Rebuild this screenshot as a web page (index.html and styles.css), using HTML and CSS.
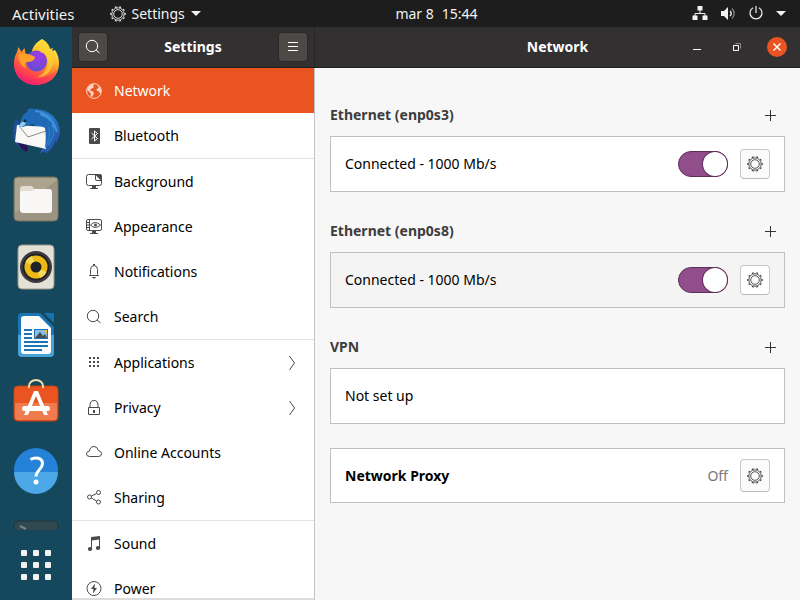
FILE: index.html
```html
<!DOCTYPE html>
<html lang="en">
<head>
<meta charset="utf-8">
<title>Settings</title>
<link rel="stylesheet" href="styles.css">
</head>
<body>
<svg class="defs" aria-hidden="true">
  <defs>
    <symbol id="gear" viewBox="0 0 16 16">
      <circle cx="8" cy="8" r="6.2" fill="none" stroke="currentColor" stroke-width=".9"/>
      <circle cx="8" cy="8" r="7.200" fill="none" stroke="currentColor" stroke-width="1.200" pathLength="20" stroke-dasharray=".8 1.2" stroke-dashoffset=".4"/>
      <circle cx="8" cy="8" r="4.300" fill="none" stroke="currentColor" stroke-width=".9"/>
    </symbol>
    <symbol id="search" viewBox="0 0 16 16">
      <g fill="none" stroke="currentColor"><circle cx="7" cy="7" r="5.700"/><path d="M11 11l3.500 3"/></g>
    </symbol>
    <symbol id="plus" viewBox="0 0 11 11">
      <path d="M5 0h1v11H5zM0 5h11v1H0z" fill="currentColor"/>
    </symbol>
    <symbol id="chevron" viewBox="0 0 8 16">
      <path d="M1.500 1 6.500 8l-5 7" fill="none" stroke="currentColor"/>
    </symbol>
  </defs>
</svg>

<header class="topbar">
  <button class="top-item activities">Activities</button>
  <button class="top-item app-menu">
    <svg class="icon"><use href="#gear"/></svg>Settings
    <svg class="caret" viewBox="0 0 10 5"><path d="M0 0h10L5 5z" fill="currentColor"/></svg>
  </button>
  <time class="clock"><span>mar 8</span><span>15:44</span></time>
  <button class="status" aria-label="System menu">
    <svg class="icon" viewBox="0 0 16 16"><path d="M5.500 0h5v4.500h-5zM.5 9.500h5V14h-5zM10.500 9.500h5V14h-5z" fill="currentColor"/><path d="M8 4v3M3 10V7.500h10V10" fill="none" stroke="currentColor"/></svg>
    <svg class="icon" viewBox="0 0 16 16"><path d="M1 5h3l4-4v13l-4-4H1z" fill="currentColor"/><path d="M10 5q2.500 2.500 0 5" fill="none" stroke="currentColor" stroke-width="1.300"/><path d="M12 2.500q4.500 5 0 10" fill="none" stroke="#888" stroke-width="1.200"/></svg>
    <svg class="icon" viewBox="0 0 16 16"><path d="M5 1.700a6 6 0 1 0 6 0M8 0v7" fill="none" stroke="currentColor" stroke-width="1.200"/></svg>
    <svg class="caret" viewBox="0 0 10 5"><path d="M0 0h10L5 5z" fill="currentColor"/></svg>
  </button>
</header>

<div class="desktop">
  <nav class="dock" aria-label="Dock">
    <div class="launchers">
    <button class="launcher" aria-label="Firefox">
      <svg viewBox="0 0 48 48">
        <defs>
          <linearGradient id="ff" x1=".8" y1="0" x2=".25" y2="1"><stop offset="0" stop-color="#fff44f"/><stop offset=".3" stop-color="#ffc42e"/><stop offset=".55" stop-color="#ff7a30"/><stop offset=".8" stop-color="#ff3d52"/><stop offset="1" stop-color="#ee1f78"/></linearGradient>
          <radialGradient id="fp" cx=".6" cy=".3" r=".8"><stop offset="0" stop-color="#a13be8"/><stop offset="1" stop-color="#5b50cc"/></radialGradient>
        </defs>
        <path d="M30 0c5 3 7 6 8 10l3-1-1 3 3-1c3 4 4 9 4 13 0 13-10 22-23 22C11 46 2 37 2 25c0-6 1-8 3-12l1.500-5 3 5 3-4 1 6 6 1c0-8 5-13 10.500-16z" fill="url(#ff)"/>
        <circle cx="24.500" cy="22" r="10.500" fill="url(#fp)"/>
        <path d="M28 13c-2-5-1-10 2-13 5 3 7 6 8 10 4 5 5 13 1 20-3 6-8 8-13 8 7-3 12-12 9-20-1-3-4-4-7-5z" fill="#ffd335" opacity=".75"/>
        <path d="M6 16c6-3 11-1 17 2 0 4-5 5-8 5-3 1-2 4-1 7-5-3-7-8-8-14z" fill="#ffa02b"/>
        <path d="M2 28c5 11 24 19 43 3-3 9-11 15-21 15S5 38 2 28z" fill="#f42468" opacity=".45"/>
      </svg>
    </button>
    <button class="launcher" aria-label="Thunderbird">
      <svg viewBox="0 0 48 48">
        <defs><linearGradient id="tb" x1="0" y1="0" x2="1" y2="1"><stop offset="0" stop-color="#2463b5"/><stop offset=".5" stop-color="#2878cb"/><stop offset="1" stop-color="#27439a"/></linearGradient></defs>
        <path d="M1 23c0-5 2-9 4-11l3 5-2 18 3 7C3 37 1 30 1 23z" fill="#234c9e"/>
        <path d="M5 34l11 5-1 6C10 43 7 39 5 34z" fill="#2a1458"/>
        <path d="M15 3 19 1l2 1c14-1 26 8 27 22 0 5-2 9-4 12v-3c-2 6-6 11-11 14l1-3-6 2 5-8z" fill="url(#tb)"/>
        <path d="M5 18 35 20l-1 22L3 35z" fill="#f8f8f7"/>
        <path d="M7 19l9 11 18-6" fill="none" stroke="#8c8c8c"/>
        <path d="M9 13c2-7 7-10 14-10 13 1 21 9 20 21-2 9-5 14-10 17 1-8 1-14 0-20-6-4-14-5-22-1-3 0-3-4-2-7z" fill="#2069b6"/>
        <path d="M23 4c10 1 17 6 20 17l-3-3M28 7c9 3 15 9 17 18" fill="none" stroke="#3c91d8" stroke-width="2"/>
        <path d="M36 20c3 3 2 12-2 19M41 21c2 4-1 12-5 17" fill="none" stroke="#3186cb"/>
        <path d="M14 15c-5-1-7 1-6 6l5-3z" fill="#8ccbea"/><circle cx="13" cy="14" r="1.400" fill="#17232e"/>
      </svg>
    </button>
    <button class="launcher" aria-label="Files">
      <svg viewBox="0 0 48 48"><rect x="2" y="2" width="44" height="44" rx="4" fill="#9c9482" stroke="#79715f"/><path d="M3 5q0-2 2-2h38q2 0 2 2L3 38z" fill="#aca48f"/><path d="M8 14q0-3 3-3h9l3 4h14v8H8z" fill="#e1ddd2"/><path d="M8 18q0-2 2-2h10l3-2h14q3 0 3 3v18q0 3-3 3H11q-3 0-3-3z" fill="#f8f7f5"/></svg>
    </button>
    <button class="launcher" aria-label="Rhythmbox">
      <svg viewBox="0 0 48 48"><rect x="6" y="2" width="36" height="44" rx="4" fill="#e4e0d6" stroke="#9c978a"/><circle cx="24" cy="24" r="16" fill="#3c3b41"/><circle cx="24" cy="24" r="13.500" fill="#202024"/><circle cx="24" cy="24" r="11.500" fill="#ecb915"/><path d="M24 24 13.500 19A12 12 0 0 1 20 13zM24 24l10.500 5A12 12 0 0 1 28 35z" fill="#f5d75b"/><circle cx="24" cy="24" r="5.500" fill="#202326"/></svg>
    </button>
    <button class="launcher" aria-label="LibreOffice Writer">
      <svg viewBox="0 0 48 48"><path d="M10 2h18l14 14v26q0 4-4 4H10q-4 0-4-4V6q0-4 4-4z" fill="#1b75b4"/><path d="M6 24h36v18q0 4-4 4H10q-4 0-4-4z" fill="#46a2d9"/><path d="M32 2h10v10z" fill="#1672ae"/><path d="M12 5h15l12 12v23q0 3-3 3H12q-3 0-3-3V8q0-3 3-3z" fill="#fcfcfc"/><g fill="#1b75b4"><path d="M12 18h8v2h-8zM12 22h8v2h-8zM12 26h8v2h-8zM12 30h24v2H12zM12 34h24v2H12zM12 38h18v2H12z"/><path d="M22 18h14v10H22z"/></g><path d="M23 19h12v8H23z" fill="#83bfe8"/><path d="M32 19h3v4z" fill="#f4bd21"/><path d="m23 27 5-6 3 4 2-2 2 4z" fill="#4b4b4b"/></svg>
    </button>
    <button class="launcher" aria-label="Ubuntu Software">
      <svg viewBox="0 0 48 48"><rect x="2" y="7" width="44" height="35" rx="4" fill="#e95420" stroke="#c4441a"/><path d="M3 24h42v14q0 3-3 3H6q-3 0-3-3z" fill="#f07b4e"/><path d="M17 9V7a7 6 0 0 1 14 0v2" fill="none" stroke="#f3dfae" stroke-width="2"/><path d="M22 12h4l10 24h-4L24 17l-8 19h-4z" fill="#fff"/><rect x="10" y="27" width="28" height="5" rx="2.500" fill="#fff"/></svg>
    </button>
    <button class="launcher" aria-label="Help">
      <svg viewBox="0 0 48 48"><circle cx="24" cy="23" r="22" fill="#2582d8"/><path d="M2 25h44a22 22 0 0 1-44 0z" fill="#4ba7e6"/><path d="M18.500 12.500c5-3 12-1.500 12 4 0 6-6.500 6.500-6.500 13" fill="none" stroke="#fff" stroke-width="3"/><circle cx="24" cy="35" r="2.500" fill="#fff"/></svg>
    </button>
    <button class="launcher" aria-label="Terminal">
      <svg viewBox="0 0 48 48"><rect x="2" y="6" width="44" height="36" rx="4" fill="#30484f" stroke="#24353b"/><path d="m8 11 6 3" stroke="#78868a" stroke-width="2"/></svg>
    </button>
    </div>
    <button class="show-apps" aria-label="Show Applications">
      <svg viewBox="0 0 30 30" fill="#f2f1f0"><rect width="6" height="6" rx="1"/><rect x="12" width="6" height="6" rx="1"/><rect x="24" width="6" height="6" rx="1"/><rect y="12" width="6" height="6" rx="1"/><rect x="12" y="12" width="6" height="6" rx="1"/><rect x="24" y="12" width="6" height="6" rx="1"/><rect y="24" width="6" height="6" rx="1"/><rect x="12" y="24" width="6" height="6" rx="1"/><rect x="24" y="24" width="6" height="6" rx="1"/></svg>
    </button>
  </nav>

  <section class="sidebar">
    <header class="titlebar">
      <button class="tool" aria-label="Search"><svg class="icon"><use href="#search"/></svg></button>
      <h1>Settings</h1>
      <button class="tool" aria-label="Menu"><svg class="icon" viewBox="0 0 16 16"><path d="M3 3h10v1H3zM3 7h10v1H3zM3 11h10v1H3z" fill="currentColor"/></svg></button>
    </header>
    <nav class="panels" aria-label="Panels">
      <ul>
        <li><a class="current" href="#network"><svg class="icon" viewBox="0 0 16 16"><circle cx="8" cy="8" r="7.400" fill="none" stroke="currentColor"/><path d="M2 4 6 1l2 .5-1 2 1 1-3 1.500-1 1.500 3 1 1 2-2 3.500-1.500-1L5 11 3 8.500 1 7zM11 2l3 2 1.300 4-1.300 3-1-2.500-2-.5-.5-2L13 5z" fill="currentColor"/></svg>Network</a></li>
        <li><a href="#bluetooth"><svg class="icon" viewBox="0 0 16 16"><rect x="3" y="0" width="11" height="16" rx="1" fill="currentColor"/><path d="m5.500 5 6 5.500-3 2.500V3l3 2.500-6 5.500" fill="none" stroke="#fff"/></svg>Bluetooth</a></li>
      </ul>
      <ul>
        <li><a href="#background"><svg class="icon" viewBox="0 0 16 16"><path d="M9.500 .5h-7Q.5.500.5 2.500v7q0 2 2 2h11q2 0 2-2V6" fill="none" stroke="currentColor"/><path d="M9 0h5q2 0 2 2v5h-5q-2 0-2-2z" fill="currentColor"/><path d="M6 12h4v2h2v1H4v-1h2z" fill="currentColor"/><path d="M10 1.500 14.500 6H11q-1 0-1-1z" fill="#fff"/></svg>Background</a></li>
        <li><a href="#appearance"><svg class="icon" viewBox="0 0 16 16"><rect x=".5" y=".5" width="15" height="11" rx="1.500" fill="none" stroke="currentColor"/><path d="M3.500 1v10M1 3.500h2M1 6h2M1 8.500h2M4.500 6q4.500-5 10 0-5.500 5-10 0z" fill="none" stroke="currentColor"/><circle cx="9.500" cy="6" r="1.500" fill="currentColor"/><path d="M6 12h4v2h2v1H4v-1h2z" fill="currentColor"/></svg>Appearance</a></li>
        <li><a href="#notifications"><svg class="icon" viewBox="0 0 16 16"><path d="M4.500 10.500V5.500q0-3.500 3.500-4 3.500.5 3.500 4v5M3 11.500h10" fill="none" stroke="currentColor"/><path d="M7 0h2v1.500H7zM6 13h4q-.5 1.500-2 1.500T6 13z" fill="currentColor"/></svg>Notifications</a></li>
        <li><a href="#search-panel"><svg class="icon"><use href="#search"/></svg>Search</a></li>
      </ul>
      <ul>
        <li><a href="#applications"><svg class="icon" viewBox="0 0 16 16" fill="currentColor"><path d="M3 2h2v2H3zM7 2h2v2H7zM11 2h2v2h-2zM3 6h2v2H3zM7 6h2v2H7zM11 6h2v2h-2zM3 10h2v2H3zM7 10h2v2H7zM11 10h2v2h-2z"/></svg>Applications<svg class="chevron"><use href="#chevron"/></svg></a></li>
        <li><a href="#privacy"><svg class="icon" viewBox="0 0 16 16"><path d="M2.500 7.500h11v7h-11zM4 7.500V5q0-4.500 4-4.500t4 4.500v2.500" fill="none" stroke="currentColor"/><path d="M7 10h2v3H7z" fill="currentColor"/></svg>Privacy<svg class="chevron"><use href="#chevron"/></svg></a></li>
        <li><a href="#accounts"><svg class="icon" viewBox="0 0 16 16"><path d="M3.500 11.500q-3 0-3-2.800 0-2.200 3-2.700.5-4.500 4.500-4.500 3.500 0 4.300 4 3.200.5 3.200 3.200 0 2.800-3 2.800z" fill="none" stroke="currentColor"/></svg>Online Accounts</a></li>
        <li><a href="#sharing"><svg class="icon" viewBox="0 0 16 16" fill="none" stroke="currentColor"><circle cx="3.500" cy="7" r="2"/><circle cx="12.500" cy="2.500" r="2"/><circle cx="12.500" cy="12" r="2"/><path d="m5.500 6 5-2.500M5.500 8l5 3"/></svg>Sharing</a></li>
      </ul>
      <ul>
        <li><a href="#sound"><svg class="icon" viewBox="0 0 16 16"><path d="M5 1 14 0v12h-1V3.500L6 4.500v9H5z" fill="currentColor"/><ellipse cx="4" cy="13" rx="2.200" ry="2" fill="currentColor"/><ellipse cx="12" cy="12" rx="2.200" ry="2" fill="currentColor"/></svg>Sound</a></li>
        <li><a href="#power"><svg class="icon" viewBox="0 0 16 16"><circle cx="8" cy="7.500" r="7" fill="none" stroke="currentColor"/><path d="M9 2.500 5 8h2.500L7 12.500 11 7H8.500z" fill="currentColor"/></svg>Power</a></li>
      </ul>
    </nav>
  </section>

  <section class="content" id="network">
    <header class="titlebar">
      <h2>Network</h2>
      <div class="window-controls">
        <button aria-label="Minimize"><svg class="icon" viewBox="0 0 16 16"><path d="M4 10h8v1H4z" fill="currentColor"/></svg></button>
        <button aria-label="Restore"><svg class="icon" viewBox="0 0 16 16" fill="none"><path d="M6.500 4.500h5v5" stroke="#8b8989"/><path d="M4.500 6.500h5v5h-5z" stroke="currentColor"/></svg></button>
        <button class="close" aria-label="Close"><svg class="icon" viewBox="0 0 16 16"><path d="m4.500 4.500 7 7m0-7-7 7" stroke="currentColor" stroke-width="1.500"/></svg></button>
      </div>
    </header>
    <main>
      <section class="group">
        <div class="group-head"><h3>Ethernet (enp0s3)</h3><button class="add" aria-label="Add profile for enp0s3"><svg><use href="#plus"/></svg></button></div>
        <div class="row"><label for="e1">Connected - 1000 Mb/s</label><input class="switch" id="e1" type="checkbox" checked><button class="options" aria-label="Options for enp0s3"><svg class="icon"><use href="#gear"/></svg></button></div>
      </section>
      <section class="group">
        <div class="group-head"><h3>Ethernet (enp0s8)</h3><button class="add" aria-label="Add profile for enp0s8"><svg><use href="#plus"/></svg></button></div>
        <div class="row hover"><label for="e2">Connected - 1000 Mb/s</label><input class="switch" id="e2" type="checkbox" checked><button class="options" aria-label="Options for enp0s8"><svg class="icon"><use href="#gear"/></svg></button></div>
      </section>
      <section class="group">
        <div class="group-head"><h3>VPN</h3><button class="add" aria-label="Add VPN"><svg><use href="#plus"/></svg></button></div>
        <div class="row"><span>Not set up</span></div>
      </section>
      <section class="group">
        <div class="row proxy"><strong>Network Proxy</strong><span class="state">Off</span><button class="options" aria-label="Proxy options"><svg class="icon"><use href="#gear"/></svg></button></div>
      </section>
    </main>
  </section>
</div>
</body>
</html>
```
FILE: styles.css
```css
* {
  box-sizing: border-box;
}

body {
  margin: 0;
  height: 100vh;
  display: flex;
  flex-direction: column;
  overflow: hidden;
  font: 14px/20px "Noto Sans", "Open Sans", sans-serif;
  color: #000;
  background: #f7f7f7;
}

button {
  margin: 0;
  padding: 0;
  border: 0;
  background: none;
  color: inherit;
  font: inherit;
  display: flex;
  align-items: center;
  justify-content: center;
}

svg {
  display: block;
  flex: none;
}

h1,
h2,
h3,
ul {
  margin: 0;
  padding: 0;
  font-size: 14px;
}

h1,
h3 {
  font-size: 14px;
}

.defs {
  position: absolute;
  width: 0;
  height: 0;
}

.icon {
  width: 16px;
  height: 16px;
}

/* Top bar */

.topbar {
  flex: none;
  height: 27px;
  padding: 0 14px 0 12px;
  display: grid;
  grid-template-columns: 1fr auto 1fr;
  align-items: center;
  background: #1d1d1d;
  color: #f2f2f2;
}

.topbar {
  display: flex;
  position: relative;
}

.activities {
  font-size: 15px;
}

.app-menu {
  margin-left: 35px;
  gap: 6px;
}

.caret {
  width: 10px;
  height: 5px;
}

.clock {
  position: absolute;
  left: 0;
  right: 0;
  margin: 0 auto;
  width: max-content;
  padding-left: 73px;
  display: flex;
  gap: 8px;
}

.status {
  margin-left: auto;
  gap: 12px;
}

.desktop {
  flex: 1;
  min-height: 0;
  display: flex;
}

/* Dock */

.dock {
  flex: none;
  width: 72px;
  display: flex;
  flex-direction: column;
  background: #15485c;
}

.launchers {
  flex: 1;
  min-height: 0;
  padding-top: 2px;
  overflow: hidden;
}

.launcher {
  width: 100%;
  height: 68px;
}

.launcher svg {
  width: 48px;
  height: 48px;
}

.show-apps {
  flex: none;
  height: 70px;
}

.show-apps svg {
  width: 30px;
  height: 30px;
}

/* Window title bars */

.titlebar {
  flex: none;
  height: 41px;
  display: flex;
  align-items: center;
  background: #333031;
  color: #fff;
  border-bottom: 1px solid #1f1c1d;
}

.sidebar {
  flex: none;
  width: 243px;
  display: flex;
  flex-direction: column;
  background: #fff;
  border-right: 1px solid #c4c4c4;
}

.sidebar .titlebar {
  padding: 0 7px;
  margin-right: -1px;
  border-right: 1px solid #282526;
  justify-content: space-between;
}

.tool {
  width: 28px;
  height: 28px;
  border-radius: 3px;
  background: #4b4a47;
  box-shadow: 0 0 0 1px #2b2829;
}

/* Panel list */

.panels {
  flex: 1;
  min-height: 0;
  overflow: hidden;
  border-bottom: 2px solid #dedcda;
}

.panels ul {
  list-style: none;
}

.panels ul + ul {
  border-top: 1px solid #e2e2e2;
}

.panels a {
  height: 45px;
  padding: 0 18px 0 14px;
  display: flex;
  align-items: center;
  gap: 12px;
  color: #000;
  text-decoration: none;
}

.panels .icon {
  color: #4a4a4a;
}

.panels .current {
  background: #e95420;
  color: #fff;
}

.panels .current .icon {
  color: #fbd3c4;
}

.chevron {
  width: 8px;
  height: 16px;
  margin-left: auto;
  color: #4a4a4a;
}

/* Network panel */

.content {
  flex: 1;
  min-width: 0;
  display: flex;
  flex-direction: column;
  background: #f7f7f7;
}

.content .titlebar {
  display: grid;
  grid-template-columns: 1fr auto 1fr;
}

.content h2 {
  grid-column: 2;
}

.window-controls {
  justify-self: end;
  padding-right: 13px;
  display: flex;
  gap: 20px;
}

.window-controls button {
  width: 20px;
  height: 20px;
}

.window-controls .close {
  border-radius: 50%;
  background: #e95420;
}

main {
  padding: 32px 15px 0;
  display: flex;
  flex-direction: column;
  gap: 24px;
}

.group-head {
  height: 30px;
  margin-bottom: 6px;
  padding-right: 4px;
  display: flex;
  align-items: center;
  justify-content: space-between;
}

.group-head h3 {
  color: #3d3d3d;
}

.add {
  width: 21px;
  height: 24px;
  color: #333;
}

.add svg {
  width: 11px;
  height: 11px;
}

.row {
  height: 56px;
  padding: 0 14px;
  display: flex;
  align-items: center;
  gap: 12px;
  background: #fff;
  border: 1px solid #c0c0c0;
}

.row.hover {
  background: #f4f4f4;
}

.row > :first-child {
  flex: 1;
}

.switch {
  appearance: none;
  flex: none;
  width: 50px;
  height: 26px;
  margin: 0;
  display: flex;
  align-items: center;
  border: 1px solid #5f2f59;
  border-radius: 13px;
  background: #924d8b;
}

.switch::before {
  content: "";
  width: 24px;
  height: 24px;
  border-radius: 50%;
  background: #fff;
  box-shadow: 0 0 0 1px #5f2f59;
}

.switch:checked {
  justify-content: flex-end;
}

.options {
  flex: none;
  width: 30px;
  height: 30px;
  border: 1px solid #c8c8c8;
  border-bottom-color: #bbb;
  border-radius: 4px;
  background: #fbfbfb;
  color: #3d3d3d;
}

.hover .options {
  background: #fff;
}

.proxy {
  height: 55px;
}

.proxy .options {
  height: 33px;
}

.state {
  color: #777;
}
```
